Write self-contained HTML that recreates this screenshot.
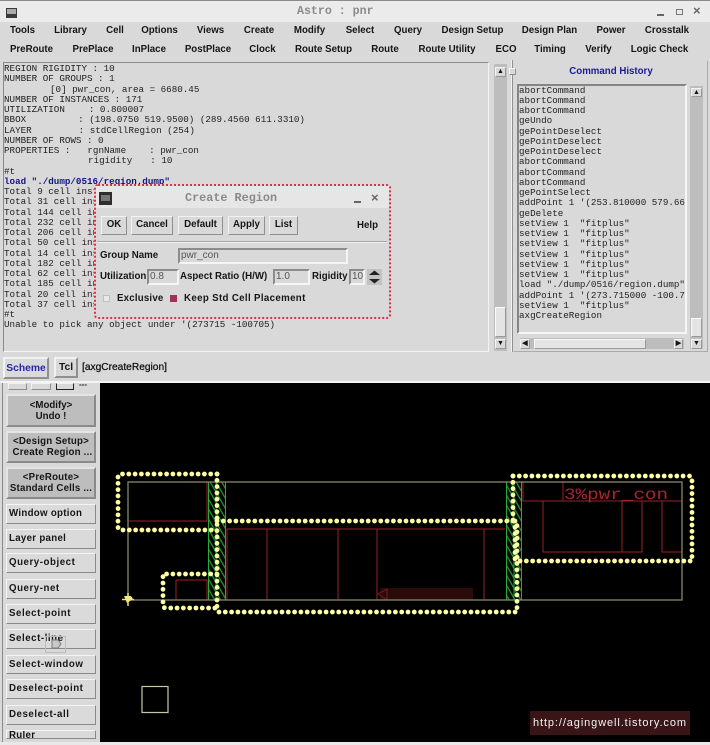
<!DOCTYPE html>
<html><head><meta charset="utf-8"><style>
html,body{margin:0;padding:0;background:#d9d9d9}
#p{position:relative;width:710px;height:745px;overflow:hidden;background:#d9d9d9;font:bold 9.7px "Liberation Sans",sans-serif;color:#161616;filter:blur(.3px)}
#p div{position:absolute;box-sizing:border-box;white-space:nowrap}
#p svg{font-weight:normal}
.m{height:14px;line-height:14px;text-align:center}
.con{font:9.22px/10.25px "Liberation Mono",monospace;color:#222;white-space:pre!important}
.b{background:#d9d9d9;border:1px solid;border-color:#f2f2f2 #8f8f8f #8f8f8f #f2f2f2;text-align:center}
.d{background:#bdbdbd;border:2px solid;border-color:#e4e4e4 #8a8a8a #8a8a8a #e4e4e4;text-align:center;line-height:11px;padding-top:4px}
.l{background:#dadada;border:1px solid;border-color:#f4f4f4 #888 #888 #f4f4f4;text-align:left;padding-left:2px;line-height:17px;letter-spacing:.3px}
.i{background:#d9d9d9;border:2px solid;border-color:#8c8c8c #f5f5f5 #f5f5f5 #8c8c8c;font:10px/12px "Liberation Sans",sans-serif;color:#555;padding-left:1px}
.t{background:#bdbdbd}
.a{background:#d9d9d9;border:1px solid;border-color:#f4f4f4 #999 #999 #f4f4f4;text-align:center;font-size:7px;line-height:7px}
.th{background:#e4e4e4;border:1px solid;border-color:#fafafa #999 #999 #fafafa}
.c{display:inline-block}
</style></head><body><div id="p">

<!-- title bar -->
<div style="left:0;top:0;width:710px;height:1px;background:#8a8a8a"></div>
<div style="left:0;top:1px;width:710px;height:21px;background:#ebebeb"></div>
<div style="left:6px;top:8px;width:11px;height:10px;background:#3a3a3a"></div>
<div style="left:7px;top:9px;width:9px;height:5px;background:#aaa"></div>
<div style="left:297px;top:5px;width:78px;height:14px;font:bold 11.6px/14px 'Liberation Mono',monospace;color:#8a8a8a">Astro : pnr</div>
<div style="left:657px;top:14px;width:7px;height:2px;background:#666"></div>
<div style="left:676px;top:9px;width:7px;height:6px;border:1px solid #777"></div>
<div style="left:693px;top:4px;width:10px;height:14px;font:bold 13px/14px 'Liberation Sans',sans-serif;color:#666">×</div>

<!-- menus -->
<div class="m" style="left:5px;width:35px;top:24px">Tools</div>
<div class="m" style="left:50px;width:41px;top:24px">Library</div>
<div class="m" style="left:100px;width:30px;top:24px">Cell</div>
<div class="m" style="left:135px;width:49px;top:24px">Options</div>
<div class="m" style="left:190px;width:41px;top:24px">Views</div>
<div class="m" style="left:239px;width:40px;top:24px">Create</div>
<div class="m" style="left:289px;width:41px;top:24px">Modify</div>
<div class="m" style="left:340px;width:40px;top:24px">Select</div>
<div class="m" style="left:388px;width:40px;top:24px">Query</div>
<div class="m" style="left:437px;width:71px;top:24px">Design Setup</div>
<div class="m" style="left:518px;width:63px;top:24px">Design Plan</div>
<div class="m" style="left:591px;width:40px;top:24px">Power</div>
<div class="m" style="left:640px;width:54px;top:24px">Crosstalk</div>

<div class="m" style="left:5px;width:53px;top:43px">PreRoute</div>
<div class="m" style="left:68px;width:50px;top:43px">PrePlace</div>
<div class="m" style="left:128px;width:42px;top:43px">InPlace</div>
<div class="m" style="left:180px;width:56px;top:43px">PostPlace</div>
<div class="m" style="left:245px;width:35px;top:43px">Clock</div>
<div class="m" style="left:290px;width:67px;top:43px">Route Setup</div>
<div class="m" style="left:367px;width:36px;top:43px">Route</div>
<div class="m" style="left:413px;width:68px;top:43px">Route Utility</div>
<div class="m" style="left:491px;width:30px;top:43px">ECO</div>
<div class="m" style="left:530px;width:40px;top:43px">Timing</div>
<div class="m" style="left:580px;width:37px;top:43px">Verify</div>
<div class="m" style="left:627px;width:65px;top:43px">Logic Check</div>

<!-- console -->
<div style="left:3px;top:62px;width:486px;height:290px;border:1px solid;border-color:#8a8a8a #f4f4f4 #f4f4f4 #8a8a8a;background:#d9d9d9"></div>
<div class="con" style="left:4px;top:64px;width:480px;height:270px">REGION RIGIDITY : 10
NUMBER OF GROUPS : 1
<span class="c" style="width:46px"></span>[0] pwr_con, area = 6680.45
NUMBER OF INSTANCES : 171
UTILIZATION<span class="c" style="width:24px"></span>: 0.800007
BBOX<span class="c" style="width:52px"></span>: (198.0750 519.9500) (289.4560 611.3310)
LAYER<span class="c" style="width:47px"></span>: stdCellRegion (254)
NUMBER OF ROWS : 0
PROPERTIES :<span class="c" style="width:17px"></span>rgnName<span class="c" style="width:23px"></span>: pwr_con
<span class="c" style="width:84px"></span>rigidity<span class="c" style="width:18px"></span>: 10
#t
<b style="color:#14148c">load "./dump/0516/region.dump"</b>
Total 9 cell instances
Total 31 cell instances
Total 144 cell instances
Total 232 cell instances
Total 206 cell instances
Total 50 cell instances
Total 14 cell instances
Total 182 cell instances
Total 62 cell instances
Total 185 cell instances
Total 20 cell instances
Total 37 cell instances
#t
Unable to pick any object under '(273715 -100705)</div>

<!-- left scrollbar -->
<div class="t" style="left:494px;top:64px;width:13px;height:287px"></div>
<div class="a" style="left:495px;top:67px;width:11px;height:10px">▲</div>
<div class="th" style="left:495px;top:307px;width:11px;height:30px"></div>
<div class="a" style="left:495px;top:339px;width:11px;height:10px">▼</div>

<!-- sash -->
<div style="left:511px;top:60px;width:2px;height:292px;background:#f2f2f2;border-right:1px solid #8f8f8f"></div>
<div style="left:509px;top:68px;width:7px;height:7px;background:#d9d9d9;border:1px solid;border-color:#f4f4f4 #8f8f8f #8f8f8f #f4f4f4"></div>

<!-- right panel -->
<div style="left:514px;top:61px;width:194px;height:291px;border-right:1px solid #aaa;border-bottom:1px solid #aaa"></div>
<div style="left:514px;top:65px;width:194px;height:14px;line-height:14px;text-align:center;color:#1c1c96">Command History</div>
<div style="left:517px;top:84px;width:170px;height:250px;border:2px solid;border-color:#858585 #f6f6f6 #f6f6f6 #858585;background:#d9d9d9"></div>
<div class="con" style="left:519px;top:85.5px;width:166px;height:246px;overflow:hidden">abortCommand
abortCommand
abortCommand
geUndo
gePointDeselect
gePointDeselect
gePointDeselect
abortCommand
abortCommand
abortCommand
gePointSelect
addPoint 1 '(253.810000 579.66
geDelete
setView 1  "fitplus"
setView 1  "fitplus"
setView 1  "fitplus"
setView 1  "fitplus"
setView 1  "fitplus"
setView 1  "fitplus"
load "./dump/0516/region.dump"
addPoint 1 '(273.715000 -100.7
setView 1  "fitplus"
axgCreateRegion</div>
<div class="t" style="left:690px;top:86px;width:13px;height:263px"></div>
<div class="a" style="left:691px;top:88px;width:11px;height:9px">▲</div>
<div class="th" style="left:691px;top:318px;width:11px;height:19px"></div>
<div class="a" style="left:691px;top:339px;width:11px;height:10px">▼</div>
<div class="t" style="left:520px;top:338px;width:164px;height:11px"></div>
<div class="a" style="left:520px;top:339px;width:10px;height:10px">◀</div>
<div class="th" style="left:534px;top:339px;width:112px;height:10px"></div>
<div class="a" style="left:674px;top:339px;width:9px;height:10px">▶</div>

<!-- dialog -->
<div style="left:94px;top:184px;width:297px;height:135px;background:#d9d9d9;border:2px dotted #de3048;border-radius:4px"></div>
<div style="left:96px;top:186px;width:293px;height:22px;background:#e6e6e6"></div>
<div style="left:99px;top:192px;width:13px;height:13px;background:#2e2e2e"></div>
<div style="left:101px;top:195px;width:9px;height:6px;background:#777"></div>
<div style="left:185px;top:191px;width:94px;height:14px;font:bold 11.8px/14px 'Liberation Mono',monospace;color:#8a8a8a">Create Region</div>
<div style="left:354px;top:201px;width:7px;height:2px;background:#666"></div>
<div style="left:371px;top:191px;width:10px;height:14px;font:bold 13px/14px 'Liberation Sans',sans-serif;color:#666">×</div>
<div class="b" style="left:101px;top:216px;width:26px;height:19px;line-height:16px">OK</div>
<div class="b" style="left:131px;top:216px;width:42px;height:19px;line-height:16px">Cancel</div>
<div class="b" style="left:178px;top:216px;width:45px;height:19px;line-height:16px">Default</div>
<div class="b" style="left:228px;top:216px;width:37px;height:19px;line-height:16px">Apply</div>
<div class="b" style="left:269px;top:216px;width:29px;height:19px;line-height:16px">List</div>
<div style="left:357px;top:219px;width:22px;height:13px;line-height:13px">Help</div>
<div style="left:97px;top:241px;width:290px;height:2px;background:#f0f0f0;border-top:1px solid #a8a8a8"></div>
<div style="left:100px;top:249px;height:13px;line-height:13px">Group Name</div>
<div class="i" style="left:178px;top:248px;width:170px;height:16px">pwr_con</div>
<div style="left:100px;top:270px;height:13px;line-height:13px">Utilization</div>
<div class="i" style="left:147px;top:269px;width:32px;height:16px">0.8</div>
<div style="left:180px;top:270px;height:13px;line-height:13px">Aspect Ratio (H/W)</div>
<div class="i" style="left:273px;top:269px;width:37px;height:16px">1.0</div>
<div style="left:312px;top:270px;height:13px;line-height:13px">Rigidity</div>
<div class="i" style="left:349px;top:269px;width:16px;height:16px">10</div>
<svg style="position:absolute;left:367px;top:269px" width="15" height="16"><rect width="15" height="16" fill="#c2c2c2"/><path d="M2 6L7.500 1.500 13 6zM2 10L13 10 7.500 14.500z" fill="#222"/></svg>
<div style="left:103px;top:295px;width:7px;height:7px;background:#e8e8e8;border:1px solid #c0c0c0"></div>
<div style="left:117px;top:292px;height:13px;line-height:13px;letter-spacing:.2px">Exclusive</div>
<div style="left:170px;top:295px;width:7px;height:7px;background:#a3305c"></div>
<div style="left:184px;top:292px;height:13px;line-height:13px;letter-spacing:.35px">Keep Std Cell Placement</div>

<!-- bottom status -->
<div class="b" style="left:3px;top:357px;width:46px;height:22px;border-width:2px;color:#2626a6;font-size:10.300px;line-height:19px;background:#dadada">Scheme</div>
<div class="b" style="left:54px;top:357px;width:24px;height:21px;border-width:2px;line-height:17px;font-size:10.300px">Tcl</div>
<div style="left:82px;top:361px;height:13px;line-height:13px;font-weight:normal;font-size:10.200px;color:#111;-webkit-text-stroke:.25px #111">[axgCreateRegion]</div>
<div style="left:0;top:381px;width:710px;height:2px;background:#f4f4f4"></div>

<!-- left tool panel -->
<div style="left:0;top:383px;width:100px;height:362px;background:#d9d9d9"></div>
<div style="left:2px;top:383px;width:1px;height:359px;background:#8a8a8a"></div>
<div class="b" style="left:8px;top:383px;width:19px;height:7px"></div>
<div class="b" style="left:31px;top:383px;width:20px;height:7px"></div>
<div class="b" style="left:56px;top:383px;width:18px;height:7px;border-color:#222;border-top-color:#f2f2f2"></div>
<div style="left:79px;top:381px;height:8px;line-height:8px;font-size:8px">---</div>

<div class="d" style="left:6px;top:394px;width:90px;height:33px">&lt;Modify&gt;<br>Undo !</div>
<div class="d" style="left:6px;top:431px;width:90px;height:32px;padding-top:3px;letter-spacing:.2px">&lt;Design Setup&gt;<br>&nbsp;Create Region ...</div>
<div class="d" style="left:6px;top:467px;width:90px;height:32px;padding-top:3px;letter-spacing:.2px">&lt;PreRoute&gt;<br>Standard Cells ...</div>
<div class="l" style="left:6px;top:504px;width:90px;height:20px">Window option</div>
<div class="l" style="left:6px;top:529px;width:90px;height:20px">Layer panel</div>
<div class="l" style="left:6px;top:553px;width:90px;height:20px;letter-spacing:.55px">Query-object</div>
<div class="l" style="left:6px;top:579px;width:90px;height:20px;letter-spacing:.55px">Query-net</div>
<div class="l" style="left:6px;top:604px;width:90px;height:20px;letter-spacing:.55px">Select-point</div>
<div class="l" style="left:6px;top:629px;width:90px;height:20px;letter-spacing:.55px">Select-line</div>
<div class="l" style="left:6px;top:655px;width:90px;height:19px;letter-spacing:.55px">Select-window</div>
<div class="l" style="left:6px;top:679px;width:90px;height:20px;letter-spacing:.55px">Deselect-point</div>
<div class="l" style="left:6px;top:705px;width:90px;height:20px;letter-spacing:.55px">Deselect-all</div>
<div class="l" style="left:6px;top:730px;width:90px;height:9px;line-height:9px;overflow:hidden;letter-spacing:.3px">Ruler</div>
<svg style="position:absolute;left:45px;top:636px" width="21" height="17"><rect x=".5" y=".5" width="20" height="16" fill="none" stroke="#bbb"/><path d="M7 4h6l3 4-3 4H7z" fill="#c8c8c8" stroke="#777"/></svg>

<!-- canvas -->
<svg style="position:absolute;left:100px;top:383px" width="610" height="359" viewBox="100 383 610 359">
<defs><pattern id="h" width="5" height="5" patternUnits="userSpaceOnUse" patternTransform="rotate(-30)"><rect width="5" height="5" fill="#000"/><line x1="1" y1="0" x2="1" y2="5" stroke="#1f9a30" stroke-width="1.300"/></pattern></defs>
<rect x="100" y="383" width="610" height="359" fill="#000"/>
<!-- dark marker -->
<rect x="380" y="588" width="93" height="12" fill="#2b0a0a"/>
<path d="M378 594l9-5v11z" fill="none" stroke="#7a1c20"/>
<!-- hatch -->
<rect x="208" y="482" width="18" height="118" fill="url(#h)"/>
<rect x="506" y="482" width="16" height="118" fill="url(#h)"/>
<g fill="none" stroke="#2aa83a" stroke-width="1">
<path d="M208.500 482V600M216 482V600M225.500 482V600"/>
<path d="M506.500 482V600M514 482V600M521.500 482V600"/>
</g>
<!-- red -->
<g fill="none" stroke="#9a2228" stroke-width="1">
<path d="M207 482V521H128"/>
<path d="M176 600V580H207V600"/>
<path d="M227 600V529H505M267 529V600M338 529V600M377 529V600M484 529V600"/>
<path d="M523 482V501H682M563 482V501M543 501V552H642V501M622 501V552M662 501V552H682"/>
</g>
<text x="564" y="499" font-family="Liberation Mono, monospace" font-size="15.500" fill="#a8262e" textLength="104" lengthAdjust="spacingAndGlyphs">3%pwr_con</text>
<!-- olive box -->
<rect x="128" y="482" width="554" height="118" fill="none" stroke="#87876a" stroke-width="1.300"/>
<!-- cursor -->
<path d="M128 593V606M122 599.500H134" stroke="#e8e080" stroke-width="1.500"/>
<path d="M124 596h7l2 3-6 4z" fill="#f2ea80"/>
<!-- yellow selection -->
<g fill="none" stroke="#fdfda4" stroke-width="4.800" stroke-linecap="round" stroke-dasharray="0 6.300">
<path d="M217 474H121Q118 474 118 477V527Q118 530 121 530H217"/>
<path d="M217 474V612"/>
<path d="M219 612H517V521"/>
<path d="M217 521H515"/>
<path d="M217 574H163V605Q163 608 166 608H217"/>
<path d="M513 476H689Q692 476 692 479V561H515"/>
<path d="M513 476V521"/>
<path d="M515 521V561"/>
</g>
<!-- small square -->
<rect x="142" y="686.500" width="26" height="26" fill="none" stroke="#c8c8a8" stroke-width="1.200"/>
<!-- watermark -->
<rect x="530" y="711" width="160" height="24" fill="#3a1518"/>
<text x="533" y="726" font-family="Liberation Sans, sans-serif" font-size="11" fill="#f4f4f4" textLength="153" lengthAdjust="spacing">http://agingwell.tistory.com</text>
</svg>
<div style="left:0;top:742px;width:710px;height:3px;background:#e8e8e8"></div>
</div></body></html>
